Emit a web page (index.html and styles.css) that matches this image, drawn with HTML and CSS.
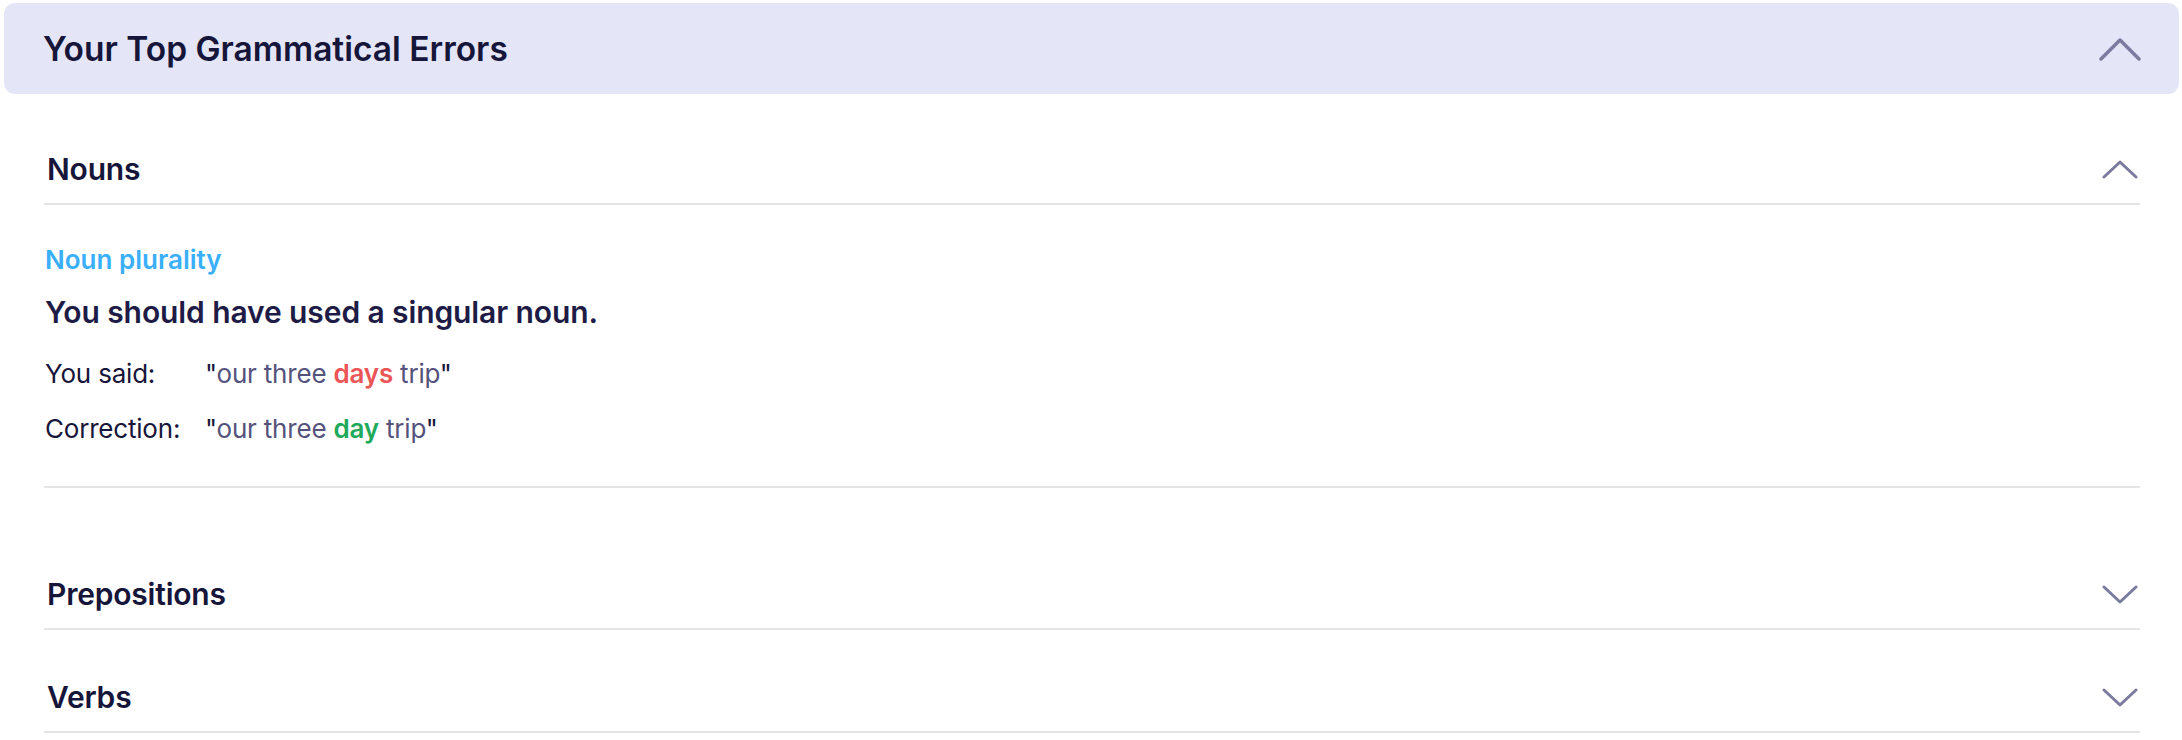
FILE: index.html
```html
<html>
<head>
    <meta charset="UTF-8">
    <meta name="viewport" content="width=device-width, initial-scale=1.0">
    <title>Your Top Grammatical Errors</title>
    <link rel="stylesheet" href="styles.css">
</head>
<body>

    <div class="panel-head">
        <h1>Your Top Grammatical Errors</h1>
        <svg class="chev-big" width="42" height="23" viewBox="0 0 42 23">
            <polyline points="2,21 21,2 40,21" fill="none" stroke="#7b7b9f" stroke-width="3.5" stroke-linecap="round" stroke-linejoin="round"/>
        </svg>
    </div>

    <div class="groups">
        <!-- open group -->
        <div class="group open">
            <div class="group-head">
                <h2>Nouns</h2>
                <svg class="chev" width="36" height="19" viewBox="0 0 36 19">
                    <polyline points="2,17 18,2 34,17" fill="none" stroke="#7b7b9f" stroke-width="3" stroke-linecap="round" stroke-linejoin="round"/>
                </svg>
            </div>
            <div class="group-body">
                <div class="err-type">Noun plurality</div>
                <div class="err-msg">You should have used a singular noun.</div>
                <div class="err-row">
                    <span class="label">You said:</span>
                    <span class="phrase">"<span class="txt">our three <b class="wrong">days</b> trip</span>"</span>
                </div>
                <div class="err-row">
                    <span class="label">Correction:</span>
                    <span class="phrase">"<span class="txt">our three <b class="right">day</b> trip</span>"</span>
                </div>
            </div>
        </div>

        <div class="group">
            <div class="group-head">
                <h2>Prepositions</h2>
                <svg class="chev" width="36" height="19" viewBox="0 0 36 19">
                    <polyline points="2,2 18,17 34,2" fill="none" stroke="#7b7b9f" stroke-width="3" stroke-linecap="round" stroke-linejoin="round"/>
                </svg>
            </div>
        </div>

        <div class="group">
            <div class="group-head">
                <h2>Verbs</h2>
                <svg class="chev" width="36" height="19" viewBox="0 0 36 19">
                    <polyline points="2,2 18,17 34,2" fill="none" stroke="#7b7b9f" stroke-width="3" stroke-linecap="round" stroke-linejoin="round"/>
                </svg>
            </div>
        </div>
    </div>

</body>
</html>
```

FILE: styles.css
```css
body { margin: 0; background: #fff; font-family: Inter, "Noto Sans", sans-serif; color: #17163a; }
h1, h2 { margin: 0; font-weight: 600; }

.panel-head { display: flex; justify-content: space-between; align-items: center; height: 91px; margin: 3px 3px 0 4px; padding: 0 38px 0 39px; background: #e4e5f7; border-radius: 11px; }
.panel-head h1 { font-size: 33.5px; line-height: 40px; letter-spacing: 0; color: #16153a; }
.chev-big { display: block; margin-top: 2px; }

.groups { margin: 0 42px 0 44px; }
.group-head { display: flex; justify-content: space-between; align-items: center; padding: 49px 2px 16px 3px; border-bottom: 2px solid #e5e5e8; }
.group-head h2 { font-size: 30px; line-height: 36px; letter-spacing: -0.2px; color: #16153a; }
.group.open .group-head { padding-top: 57px; }
.chev { display: block; }

.group-body { padding: 39px 0 41px 1px; margin-bottom: 39px; border-bottom: 2px solid #e5e5e8; }
.err-type { font-size: 26px; line-height: 32px; font-weight: 600; color: #3aaffb; }
.err-msg { margin-top: 18px; font-size: 30px; line-height: 36px; font-weight: 600; color: #1e1c46; letter-spacing: -0.1px; }
.err-row { display: grid; grid-template-columns: 160px auto; font-size: 26px; line-height: 32px; margin-top: 23px; color: #17163a; letter-spacing: -0.2px; }
.err-msg + .err-row { margin-top: 28px; }
.phrase .txt { color: #55527c; }
.wrong { color: #ec5555; font-weight: 600; }
.right { color: #20a95a; font-weight: 600; }
```
